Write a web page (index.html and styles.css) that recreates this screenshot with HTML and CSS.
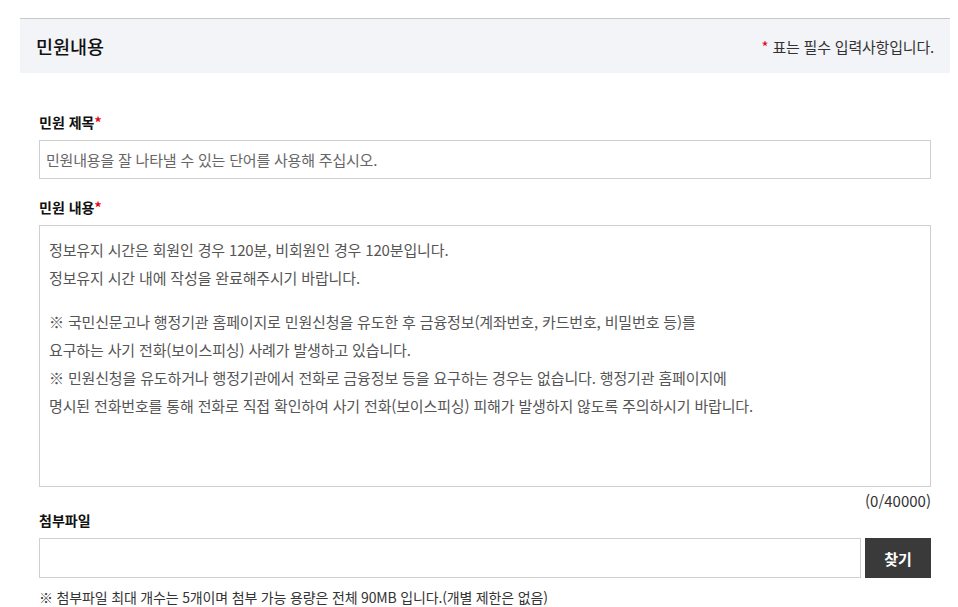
FILE: index.html
```html
<!DOCTYPE html>
<html lang="ko">
<head>
    <meta charset="utf-8">
    <title>민원내용</title>
    <link rel="stylesheet" href="styles.css">
</head>
<body>
    <div class="wrap">
        <div class="sec-head">
            <h2>민원내용</h2>
            <p class="req-note"><span class="star">*</span> 표는 필수 입력사항입니다.</p>
        </div>

        <div class="form">
            <label class="lbl" for="title">민원 제목<span class="star">*</span></label>
            <input id="title" class="txt" type="text" placeholder="민원내용을 잘 나타낼 수 있는 단어를 사용해 주십시오.">

            <label class="lbl lbl-gap">민원 내용<span class="star">*</span></label>
            <div class="area">
                <p>정보유지 시간은 회원인 경우 120분, 비회원인 경우 120분입니다.<br>정보유지 시간 내에 작성을 완료해주시기 바랍니다.</p>
                <p>※ 국민신문고나 행정기관 홈페이지로 민원신청을 유도한 후 금융정보(계좌번호, 카드번호, 비밀번호 등)를<br>요구하는 사기 전화(보이스피싱) 사례가 발생하고 있습니다.<br>※ 민원신청을 유도하거나 행정기관에서 전화로 금융정보 등을 요구하는 경우는 없습니다. 행정기관 홈페이지에<br>명시된 전화번호를 통해 전화로 직접 확인하여 사기 전화(보이스피싱) 피해가 발생하지 않도록 주의하시기 바랍니다.</p>
            </div>
            <div class="count">(0/40000)</div>

            <label class="lbl">첨부파일</label>
            <div class="file-row">
                <input class="txt file-name" type="text" readonly>
                <button class="btn-find">찾기</button>
            </div>
            <p class="file-note">※ 첨부파일 최대 개수는 5개이며 첨부 가능 용량은 전체 90MB 입니다.(개별 제한은 없음)</p>
        </div>
    </div>
</body>
</html>
```

FILE: styles.css
```css
body { margin: 0; background: #fff; color: #222; font-family: "Noto Sans CJK KR", "Noto Sans", sans-serif; }
.wrap { width: 930px; margin-left: 20px; padding-top: 18px; }
.sec-head { display: flex; justify-content: space-between; align-items: center; height: 54px; background: #f3f4f8; border-top: 1px solid #c8c8c8; padding: 0 16px; }
.sec-head h2 { margin: 0; font-size: 18.5px; font-weight: 500; color: #111; }
.req-note { margin: 0; font-size: 15px; letter-spacing: -0.2px; color: #333; }
.star { color: #e60012; }
.form { padding: 39px 19px 0; }
.lbl { display: block; font-size: 14px; font-weight: 700; line-height: 20px; margin-bottom: 8px; color: #111; }
.lbl-gap { margin-top: 18px; }
.txt { display: block; box-sizing: border-box; width: 100%; height: 39px; border: 1px solid #cfcfcf; padding: 0 6px; font-family: inherit; font-size: 15px; letter-spacing: -0.2px; color: #333; outline: none; }
.txt::placeholder { color: #666; }
.area { box-sizing: border-box; height: 262px; border: 1px solid #cfcfcf; padding: 10px 9px; font-size: 15px; letter-spacing: -0.15px; line-height: 28px; color: #555; }
.area p { margin: 0 0 16px; }
.count { text-align: right; font-size: 15px; line-height: 18px; margin-top: 5px; color: #333; }
.file-row { display: flex; gap: 4px; height: 40px; }
.file-row .file-name { flex: 1; height: 40px; }
.btn-find { width: 66px; border: none; background: #3a3a3a; color: #fff; font-family: inherit; font-size: 15px; font-weight: 700; cursor: pointer; }
.file-note { margin: 10px 0 0; font-size: 14px; letter-spacing: -0.17px; line-height: 18px; color: #333; }
```
